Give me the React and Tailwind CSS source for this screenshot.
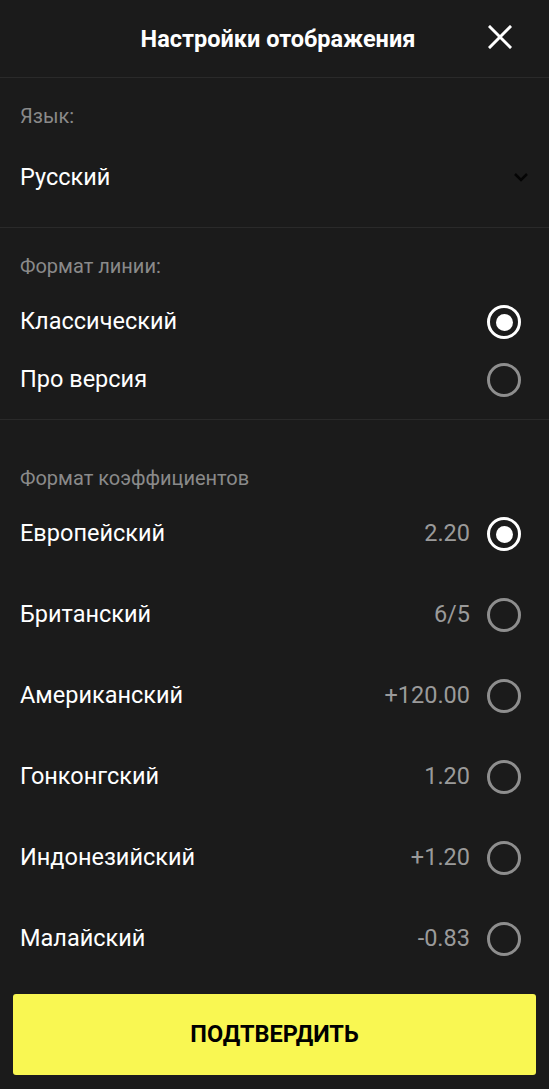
import React from "react";

const Radio = ({ checked }) => (
  <div
    className={`w-[34px] h-[34px] rounded-full border-[3px] flex items-center justify-center ${
      checked ? "border-white" : "border-[#8e8e8e]"
    }`}
  >
    {checked && <div className="w-[17px] h-[17px] rounded-full bg-white" />}
  </div>
);

const odds = [
  { name: "Европейский", value: "2.20", checked: true },
  { name: "Британский", value: "6/5" },
  { name: "Американский", value: "+120.00" },
  { name: "Гонконгский", value: "1.20" },
  { name: "Индонезийский", value: "+1.20" },
  { name: "Малайский", value: "-0.83" },
];

const App = () => {
  return (
    <div className="w-[549px] h-[1089px] bg-[#1b1b1b] text-white font-['Roboto',sans-serif] flex flex-col">
      <div className="h-[78px] flex items-center justify-center relative border-b border-[#2a2a2a]">
        <span className="text-[23.5px] font-bold pl-[7px] leading-[28px]">Настройки отображения</span>
        <button className="absolute right-[37px] top-[25px]">
          <svg width="24" height="24" viewBox="0 0 24 24" stroke="white" strokeWidth="3" strokeLinecap="square">
            <path d="M2 2 L22 22 M22 2 L2 22" />
          </svg>
        </button>
      </div>

      <div className="px-5 border-b border-[#2a2a2a] h-[150px]">
        <div className="pt-[26px] text-[20px] text-[#8a8a8a] leading-[24px]">Язык:</div>
        <div className="mt-[36px] flex items-center justify-between h-[26px]">
          <span className="text-[23.5px] leading-[26px]">Русский</span>
          <svg width="16" height="10" viewBox="0 0 16 10" fill="none" stroke="#050505" strokeWidth="2.5">
            <path d="M2 2 L8 8 L14 2" />
          </svg>
        </div>
      </div>

      <div className="px-5 border-b border-[#2a2a2a] h-[192px]">
        <div className="pt-[26px] text-[20px] text-[#8a8a8a] leading-[24px]">Формат линии:</div>
        <div className="mt-[27px] flex items-center justify-between h-[34px]">
          <span className="text-[23.5px]">Классический</span>
          <div className="mr-[8px]"><Radio checked /></div>
        </div>
        <div className="mt-[24px] flex items-center justify-between h-[34px]">
          <span className="text-[23.5px]">Про версия</span>
          <div className="mr-[8px]"><Radio /></div>
        </div>
      </div>

      <div className="px-5 flex-1">
        <div className="pt-[46px] text-[20px] text-[#8a8a8a] leading-[24px]">Формат коэффициентов</div>
        <div className="mt-[27px] flex flex-col gap-[47px]">
          {odds.map((o) => (
            <div key={o.name} className="flex items-center h-[34px]">
              <span className="text-[23.5px] flex-1">{o.name}</span>
              <span className="text-[23.5px] text-[#9a9a9a] mr-[17px]">{o.value}</span>
              <div className="mr-[8px]"><Radio checked={o.checked} /></div>
            </div>
          ))}
        </div>
      </div>

      <div className="px-[13px] pb-[14px]">
        <button className="w-full h-[81px] rounded-[3px] bg-[#f9f752] text-black text-[23.5px] font-bold">
          ПОДТВЕРДИТЬ
        </button>
      </div>
    </div>
  );
};

export default App;
